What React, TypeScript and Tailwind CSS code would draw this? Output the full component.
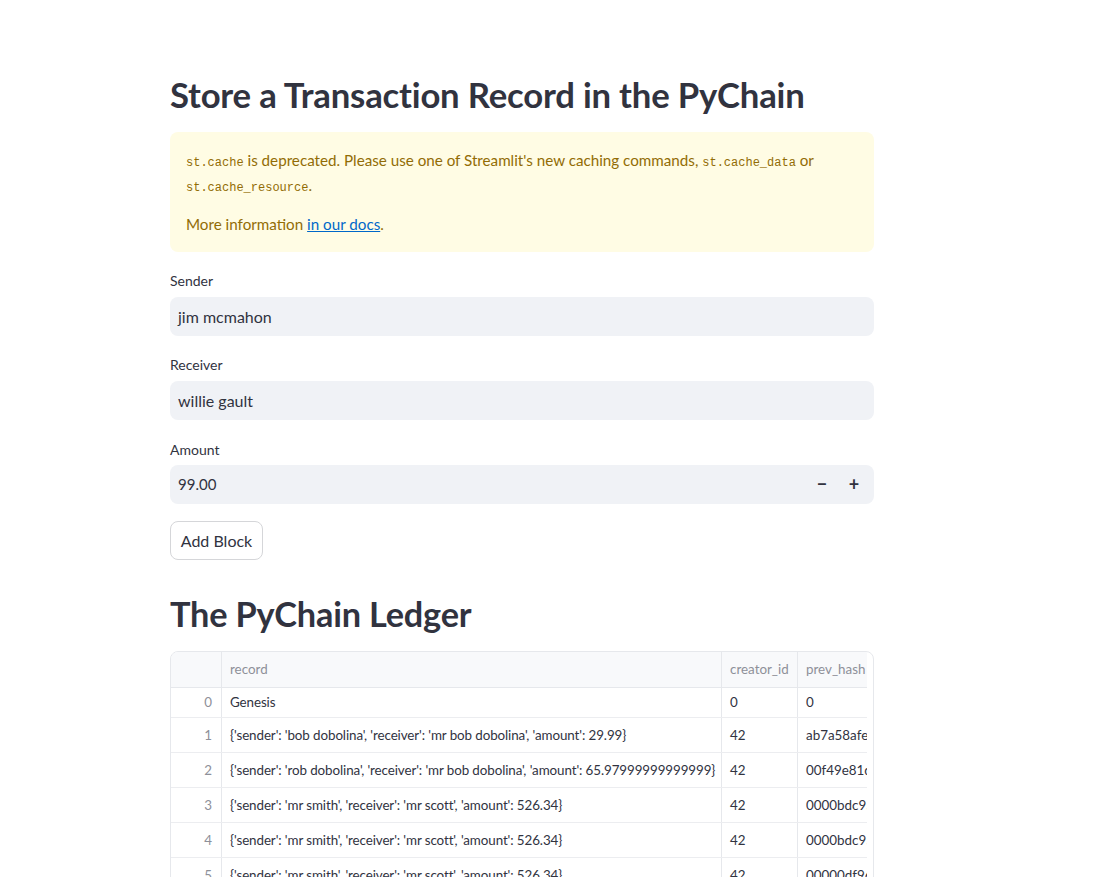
import React from "react";

const rows = [
  { i: 0, record: "Genesis", creator: "0", hash: "0" },
  {
    i: 1,
    record: "{'sender': 'bob dobolina', 'receiver': 'mr bob dobolina', 'amount': 29.99}",
    creator: "42",
    hash: "ab7a58afe",
  },
  {
    i: 2,
    record: "{'sender': 'rob dobolina', 'receiver': 'mr bob dobolina', 'amount': 65.97999999999999}",
    creator: "42",
    hash: "00f49e81d",
  },
  { i: 3, record: "{'sender': 'mr smith', 'receiver': 'mr scott', 'amount': 526.34}", creator: "42", hash: "0000bdc95" },
  { i: 4, record: "{'sender': 'mr smith', 'receiver': 'mr scott', 'amount': 526.34}", creator: "42", hash: "0000bdc95" },
  { i: 5, record: "{'sender': 'mr smith', 'receiver': 'mr scott', 'amount': 526.34}", creator: "42", hash: "00000df96" },
];

function Field({ label, value }: { label: string; value: string }) {
  return (
    <div className="flex flex-col">
      <label className="h-[29px] pt-[3px] text-[14px] leading-[20px] text-[#31333F]">{label}</label>
      <div className="flex h-[39px] items-center rounded-lg bg-[#F0F2F6] px-2 text-[16px] text-[#31333F]">{value}</div>
    </div>
  );
}

export default function App() {
  const code = "font-['Liberation_Mono',monospace] text-[12px] leading-none";
  return (
    <div className="min-h-screen bg-white font-['Lato',sans-serif] text-[#31333F]">
      <main className="ml-[170px] flex w-[704px] flex-col pt-[73px] pb-10">
        <h1 className="text-[34.7px] leading-[43px] font-bold tracking-[-0.2px]">
          Store a Transaction Record in the PyChain
        </h1>
        <div className="mt-[16px] rounded-lg bg-[#FFFCE4] px-4 pt-4 pb-[15px] text-[15.2px] leading-[25px] text-[#926C05]">
          <p>
            <code className={code}>st.cache</code> is deprecated. Please use one of Streamlit's new caching commands,{" "}
            <code className={code}>st.cache_data</code> or <code className={code}>st.cache_resource</code>.
          </p>
          <p className="mt-[14px]">
            More information{" "}
            <a href="#" className="text-[#0068C9] underline">
              in our docs
            </a>
            .
          </p>
        </div>
        <div className="mt-4 flex flex-col gap-4">
          <Field label="Sender" value="jim mcmahon" />
          <Field label="Receiver" value="willie gault" />
          <div className="flex flex-col">
            <label className="h-[29px] pt-[4px] text-[14px] leading-[20px]">Amount</label>
            <div className="flex h-[39px] items-center rounded-lg bg-[#F0F2F6] pl-2 text-[15px]">
              <span className="flex-1">99.00</span>
              <span className="flex w-8 justify-center text-[18px] font-bold">−</span>
              <span className="mr-1 flex w-8 justify-center text-[18px] font-bold">+</span>
            </div>
          </div>
        </div>
        <button className="mt-[17px] h-[39px] w-[93px] rounded-lg border border-[#D5D6D9] bg-white text-[16px] text-[#31333F]">
          Add Block
        </button>
        <h2 className="mt-[32px] text-[34.3px] leading-[43px] font-bold tracking-[-0.2px]">The PyChain Ledger</h2>
        <div className="mt-[16px] w-[704px] overflow-hidden rounded-lg border border-[#E6E8EC] pr-[6px] text-[13.4px]">
          <div className="flex h-[36px] border-b border-[#E6E8EC] bg-[#F8F9FB] text-[#8E9099]">
            <div className="w-[51px] border-r border-[#E6E8EC]" />
            <div className="flex w-[500px] items-center border-r border-[#E6E8EC] px-2">record</div>
            <div className="flex w-[76px] items-center border-r border-[#E6E8EC] px-2">creator_id</div>
            <div className="flex w-[69px] items-center overflow-hidden px-2 whitespace-nowrap">prev_hash</div>
          </div>
          {rows.map((r) => (
            <div
              key={r.i}
              className={`flex border-b border-[#ECEDF0] ${r.i === 0 ? "h-[30px]" : "h-[35px]"}`}
            >
              <div className="flex w-[51px] items-center justify-end border-r border-[#E6E8EC] pr-[9px] text-[#8E9099]">
                {r.i}
              </div>
              <div className="flex w-[500px] items-center overflow-hidden border-r border-[#E6E8EC] pl-2 tracking-[-0.1px] whitespace-nowrap">
                {r.record}
              </div>
              <div className="flex w-[76px] items-center border-r border-[#E6E8EC] px-2">{r.creator}</div>
              <div className="flex w-[69px] items-center overflow-hidden pl-2 whitespace-nowrap">{r.hash}</div>
            </div>
          ))}
        </div>
      </main>
    </div>
  );
}
